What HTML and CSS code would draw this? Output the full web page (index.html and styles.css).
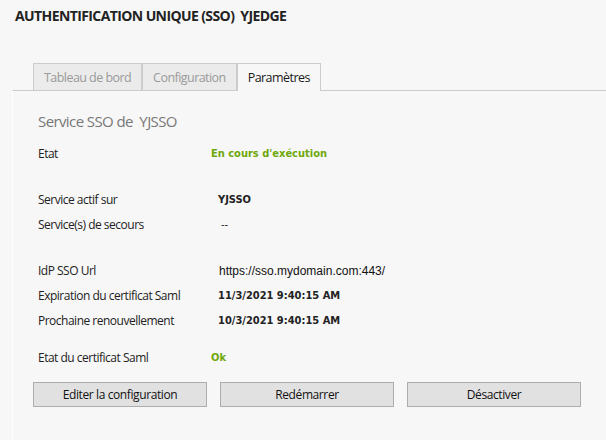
FILE: index.html
```html
<!DOCTYPE html>
<html lang="fr">
<head>
    <meta charset="UTF-8">
    <meta name="viewport" content="width=device-width, initial-scale=1.0">
    <title>Authentification unique (SSO)</title>
    <link rel="stylesheet" href="styles.css">
</head>
<body>
    <h1 class="page-title">AUTHENTIFICATION UNIQUE (SSO)&nbsp; YJEDGE</h1>

    <div class="tabs-area">
        <div class="tabs">
            <div class="tab">Tableau de bord</div>
            <div class="tab">Configuration</div>
            <div class="tab active">Paramètres</div>
        </div>

        <div class="panel">
            <h2 class="panel-title">Service SSO de&nbsp; YJSSO</h2>

            <div class="fields">
                <div class="group">
                    <div class="label">Etat</div>
                    <div class="value status">En cours d'exécution</div>
                </div>

                <div class="group spaced">
                    <div class="label">Service actif sur</div>
                    <div class="value bold">YJSSO</div>
                    <div class="label">Service(s) de secours</div>
                    <div class="value bold dash">--</div>
                </div>

                <div class="group spaced">
                    <div class="label">IdP SSO Url</div>
                    <div class="value url">https://sso.mydomain.com:443/</div>
                    <div class="label">Expiration du certificat Saml</div>
                    <div class="value bold">11/3/2021 9:40:15 AM</div>
                    <div class="label">Prochaine renouvellement</div>
                    <div class="value bold">10/3/2021 9:40:15 AM</div>
                </div>

                <div class="group near">
                    <div class="label">Etat du certificat Saml</div>
                    <div class="value status">Ok</div>
                </div>
            </div>

            <div class="actions">
                <button class="btn">Editer la configuration</button>
                <button class="btn">Redémarrer</button>
                <button class="btn">Désactiver</button>
            </div>
        </div>
    </div>
</body>
</html>
```

FILE: styles.css
```css
body {
    margin: 0;
    background: #f7f7f7;
    font-family: "Open Sans", "Noto Sans", sans-serif;
    color: #222;
}
.page-title {
    margin: 0;
    padding: 6px 0 0 15px;
    font-size: 14px;
    line-height: 20px;
    font-weight: 700;
    letter-spacing: -0.6px;
    color: #222;
}
.tabs-area {
    margin: 37px 0 0 12px;
}
.tabs {
    display: flex;
    padding-left: 21px;
}
.tab {
    height: 26px;
    padding: 0 10px;
    display: flex;
    align-items: center;
    border: 1px solid #ccc;
    border-bottom: none;
    background: #ebebeb;
    color: #9a9a9a;
    font-size: 12.5px;
    letter-spacing: -0.55px;
}
.tab.active {
    background: #f7f7f7;
    color: #1a1a1a;
    height: 27px;
    margin-bottom: -1px;
    position: relative;
}
.panel {
    border-top: 1px solid #ccc;
    border-left: 1px solid #fdfdfd;
    padding: 20px 0 40px 20px;
}
.panel-title {
    margin: 0 0 10px 5px;
    font-size: 15px;
    line-height: 20px;
    font-weight: 400;
    letter-spacing: -0.6px;
    color: #777;
}
.fields {
    padding-left: 5px;
}
.group {
    display: grid;
    grid-template-columns: 173px 1fr;
    grid-auto-rows: 25px;
    align-items: center;
}
.group.spaced {
    margin-top: 21px;
}
.group.near {
    margin-top: 12px;
}
.label {
    font-size: 12px;
    letter-spacing: -0.5px;
    color: #222;
}
.value {
    font-family: "DejaVu Sans Condensed", "DejaVu Sans", sans-serif;
    font-size: 11px;
    font-weight: 700;
    color: #222;
    padding-left: 7px;
}
.value.dash {
    padding-left: 10px;
    font-weight: 400;
}
.value.status {
    color: #6fa80a;
    padding-left: 0;
}
.value.url {
    font-family: "Liberation Sans", Arial, sans-serif;
    font-size: 12px;
    font-weight: 400;
    color: #111;
    padding-left: 8px;
}
.actions {
    display: flex;
    gap: 13px;
    margin-top: 12px;
}
.btn {
    width: 174px;
    height: 25px;
    background: #e1e1e1;
    border: 1px solid #adadad;
    font-family: "Open Sans", "Noto Sans", sans-serif;
    font-size: 12px;
    letter-spacing: -0.4px;
    color: #111;
    padding: 0;
}
```
